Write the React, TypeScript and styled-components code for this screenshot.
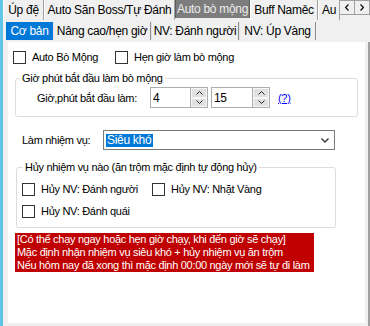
import React from 'react';
import styled, { createGlobalStyle } from 'styled-components';

const Global = createGlobalStyle`
  html, body { margin: 0; padding: 0; background: #f0f0f0; }
  body { font-family: "Liberation Sans", Arial, sans-serif; font-size: 11px; color: #000; letter-spacing: -0.3px; }
  * { box-sizing: border-box; }
`;

const Window = styled.div`
  width: 370px; height: 326px; display: flex; overflow: hidden; background: #f0f0f0;
`;
const SideStrip = styled.div`
  width: 3px; flex: none; background: #5fc6ea;
`;
const Main = styled.div`
  flex: 1; min-width: 0; display: flex; flex-direction: column;
`;
const TopBar = styled.div`
  height: 20px; flex: none; display: flex; align-items: flex-start;
`;
const TopTabs = styled.div`
  flex: 1; min-width: 0; height: 20px; display: flex; overflow: hidden;
`;
const TopTab = styled.div<{ $w: number; $active?: boolean; $start?: boolean }>`
  flex: none; width: ${p => p.$w}px; height: ${p => (p.$active ? 18 : 20)}px;
  display: flex; align-items: center; justify-content: ${p => (p.$start ? 'flex-start' : 'center')};
  padding-left: ${p => (p.$start ? 3 : 0)}px;
  white-space: nowrap; font-size: 12px;
  background: ${p => (p.$active ? '#7d7d7d' : '#f0f0f0')};
  color: ${p => (p.$active ? '#ececec' : '#000')};
  border-right: 1px solid ${p => (p.$active ? '#5c5c5c' : '#a0a0a0')};
  border-left: 1px solid ${p => (p.$active ? '#5c5c5c' : '#ffffff')};
`;
const ScrollButtons = styled.div`
  flex: none; display: flex;
`;
const ScrollButton = styled.div`
  width: 16px; height: 15px; display: flex; align-items: center; justify-content: center;
  background: #f0f0f0; border: 1px solid #a0a0a0; margin-left: -1px;
`;

const SubBar = styled.div`
  height: 22px; flex: none; display: flex; align-items: flex-end; padding: 0 0 2px 3px;
`;
const SubTab = styled.div<{ $w: number; $active?: boolean }>`
  flex: none; width: ${p => p.$w}px; height: 18px; display: flex; align-items: center; justify-content: center;
  white-space: nowrap; font-size: 12px;
  background: ${p => (p.$active ? '#0078d7' : '#f0f0f0')};
  color: ${p => (p.$active ? '#ffffff' : '#000')};
  border-right: 1px solid ${p => (p.$active ? '#0078d7' : '#8c8c8c')};
  border-left: 1px solid ${p => (p.$active ? '#0078d7' : '#e3e3e3')};
`;

const PageFrame = styled.div`
  flex: 1; display: flex; padding: 0 3px 3px 5px; border-right: 2px solid #a0a0a0;
`;
const Content = styled.div`
  flex: 1; background: #fff; display: flex; flex-direction: column; align-items: flex-start; padding-top: 7px;
`;

const CheckRow = styled.div<{ $left: number }>`
  display: flex; height: 16px; align-items: center; padding-left: ${p => p.$left}px;
`;
const CheckItem = styled.label<{ $w?: number }>`
  display: flex; align-items: center; gap: 6px; white-space: nowrap;
  ${p => (p.$w ? `width: ${p.$w}px;` : '')}
`;
const Box = styled.span`
  width: 13px; height: 13px; flex: none; border: 1px solid #333; background: #fff;
`;

const Group = styled.fieldset<{ $left: number; $w: number; $top: number }>`
  margin: ${p => p.$top}px 0 0 ${p => p.$left}px; width: ${p => p.$w}px; min-width: 0;
  padding: 2px 0 8px 0; border: 1px solid #dcdcdc; border-radius: 3px;
`;
const GroupTitle = styled.legend<{ $indent: number }>`
  margin-left: ${p => p.$indent}px; padding: 0 2px; line-height: 13px; font-size: 11px; white-space: nowrap;
`;
const TimeRow = styled.div`
  display: flex; align-items: center; height: 21px; padding-left: 21px;
`;
const FieldLabel = styled.span<{ $w: number }>`
  width: ${p => p.$w}px; flex: none; white-space: nowrap;
`;
const Spin = styled.div<{ $w: number; $gap?: number }>`
  width: ${p => p.$w}px; height: 21px; flex: none; display: flex; margin-left: ${p => p.$gap ?? 0}px;
  border: 1px solid #adadad; background: #fff;
`;
const SpinValue = styled.span`
  flex: 1; padding: 3px 0 0 2px; font-size: 12px; line-height: 14px;
`;
const SpinButtons = styled.div`
  width: 17px; flex: none; display: flex; flex-direction: column; border-left: 1px solid #adadad; background: #e1e1e1;
`;
const SpinButton = styled.div`
  flex: 1; display: flex; align-items: center; justify-content: center; border: 1px solid #f6f6f6;
`;
const HelpLink = styled.a`
  margin-left: 8px; color: #0000ff; text-decoration: underline; cursor: pointer;
`;

const ComboRow = styled.div`
  display: flex; align-items: center; margin-top: 13px; padding-left: 14px; height: 20px;
`;
const Combo = styled.div`
  width: 232px; height: 20px; border: 1px solid #7a7a7a; background: #fff; display: flex; align-items: center;
  padding: 0 5px 0 2px;
`;
const ComboValue = styled.span`
  flex: 1; display: flex;
`;
const Selected = styled.span`
  background: #0078d7; color: #fff; padding: 0 2px 0 1px; line-height: 13px; font-size: 12px;
`;

const Group2Rows = styled.div`
  display: flex; flex-direction: column; gap: 6px; padding-top: 5px;
`;

const Notice = styled.div`
  margin: 5px 0 0 7px; background: #c00000; color: #fff; line-height: 13px; padding: 0 4px 0 2px; font-size: 11px;
`;

const Up = () => (
  <svg width="7" height="4" viewBox="0 0 7 4"><path d="M0.5 3.5 L3.5 0.5 L6.5 3.5" fill="none" stroke="#222" strokeWidth="1" /></svg>
);
const Down = () => (
  <svg width="7" height="4" viewBox="0 0 7 4"><path d="M0.5 0.5 L3.5 3.5 L6.5 0.5" fill="none" stroke="#222" strokeWidth="1" /></svg>
);
const Left = () => (
  <svg width="4" height="7" viewBox="0 0 4 7"><path d="M3.5 0.5 L0.5 3.5 L3.5 6.5" fill="none" stroke="#000" strokeWidth="1.2" /></svg>
);
const Right = () => (
  <svg width="4" height="7" viewBox="0 0 4 7"><path d="M0.5 0.5 L3.5 3.5 L0.5 6.5" fill="none" stroke="#000" strokeWidth="1.2" /></svg>
);
const ComboArrow = () => (
  <svg width="8" height="5" viewBox="0 0 8 5"><path d="M0.5 0.5 L4 4 L7.5 0.5" fill="none" stroke="#333" strokeWidth="1.4" /></svg>
);

export default function App() {
  return (
    <>
      <Global />
      <Window>
        <SideStrip />
        <Main>
          <TopBar>
            <TopTabs>
              <TopTab $w={41}>Úp đệ</TopTab>
              <TopTab $w={131}>Auto Săn Boss/Tự Đánh</TopTab>
              <TopTab $w={75} $active>Auto bò mộng</TopTab>
              <TopTab $w={68}>Buff Naměc</TopTab>
              <TopTab $w={22} $start>Au</TopTab>
            </TopTabs>
            <ScrollButtons>
              <ScrollButton><Left /></ScrollButton>
              <ScrollButton><Right /></ScrollButton>
            </ScrollButtons>
          </TopBar>
          <SubBar>
            <SubTab $w={47} $active>Cơ bản</SubTab>
            <SubTab $w={98}>Nâng cao/hẹn giờ</SubTab>
            <SubTab $w={88}>NV: Đánh người</SubTab>
            <SubTab $w={77}>NV: Úp Vàng</SubTab>
          </SubBar>
          <PageFrame>
            <Content>
              <CheckRow $left={5}>
                <CheckItem $w={102}><Box />Auto Bò Mộng</CheckItem>
                <CheckItem><Box />Hẹn giờ làm bò mộng</CheckItem>
              </CheckRow>
              <Group $left={7} $w={343} $top={7}>
                <GroupTitle $indent={4}>Giờ phút bắt đầu làm bò mộng</GroupTitle>
                <TimeRow>
                  <FieldLabel $w={113}>Giờ,phút bắt đầu làm:</FieldLabel>
                  <Spin $w={58}>
                    <SpinValue>4</SpinValue>
                    <SpinButtons>
                      <SpinButton><Up /></SpinButton>
                      <SpinButton><Down /></SpinButton>
                    </SpinButtons>
                  </Spin>
                  <Spin $w={59} $gap={3}>
                    <SpinValue>15</SpinValue>
                    <SpinButtons>
                      <SpinButton><Up /></SpinButton>
                      <SpinButton><Down /></SpinButton>
                    </SpinButtons>
                  </Spin>
                  <HelpLink>(?)</HelpLink>
                </TimeRow>
              </Group>
              <ComboRow>
                <FieldLabel $w={81}>Làm nhiệm vụ:</FieldLabel>
                <Combo>
                  <ComboValue><Selected>Siêu khó</Selected></ComboValue>
                  <ComboArrow />
                </Combo>
              </ComboRow>
              <Group $left={8} $w={320} $top={11}>
                <GroupTitle $indent={6}>Hủy nhiệm vụ nào (ăn trộm mặc định tự động hủy)</GroupTitle>
                <Group2Rows>
                  <CheckRow $left={5}>
                    <CheckItem $w={130}><Box />Hủy NV: Đánh người</CheckItem>
                    <CheckItem><Box />Hủy NV: Nhặt Vàng</CheckItem>
                  </CheckRow>
                  <CheckRow $left={5}>
                    <CheckItem><Box />Hủy NV: Đánh quái</CheckItem>
                  </CheckRow>
                </Group2Rows>
              </Group>
              <Notice>
                [Có thể chạy ngay hoặc hẹn giờ chạy, khi đến giờ sẽ chạy]<br />
                Mặc định nhận nhiệm vụ siêu khó + hủy nhiệm vụ ăn trộm<br />
                Nếu hôm nay đã xong thì mặc định 00:00 ngày mới sẽ tự đi làm
              </Notice>
            </Content>
          </PageFrame>
        </Main>
      </Window>
    </>
  );
}
